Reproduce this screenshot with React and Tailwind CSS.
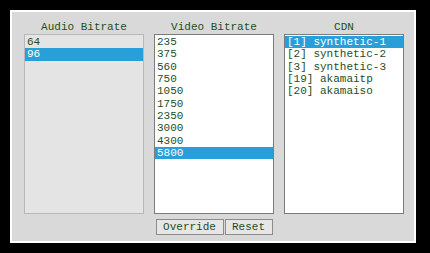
const audio = ['64', '96'];
const video = ['235', '375', '560', '750', '1050', '1750', '2350', '3000', '4300', '5800'];
const cdn = ['[1] synthetic-1', '[2] synthetic-2', '[3] synthetic-3', '[19] akamaitp', '[20] akamaiso'];

const ListBox = ({ title, items, selected, disabled }) => {
  return (
    <div className="flex flex-col w-[120px]">
      <div className="h-[14px] leading-[14px] text-center text-[#1f4d1f]">{title}</div>
      <div
        className={
          disabled
            ? 'h-[180px] border border-[#b8b8b8] bg-[#e4e4e4] py-[1px]'
            : 'h-[180px] border border-[#7c7c7c] bg-white py-[1px]'
        }
      >
        {items.map((item) => (
          <div
            key={item}
            className={
              item === selected
                ? 'h-[12.33px] leading-[12.33px] pl-[2px] whitespace-pre bg-[#289fd8] text-white'
                : 'h-[12.33px] leading-[12.33px] pl-[2px] whitespace-pre text-[#1f4d1f]'
            }
          >
            {item}
          </div>
        ))}
      </div>
    </div>
  );
};

export default function App() {
  return (
    <div
      className="w-[430px] h-[253px] bg-black pt-[10px] pl-[10px] text-[11px]"
      style={{ fontFamily: '"Liberation Mono", "Courier New", monospace' }}
    >
      <div className="w-[406px] h-[233px] border-2 border-white bg-[#d9d9d9] pl-[12px] pt-[8px]">
        <div className="flex gap-[10px]">
          <ListBox title="Audio Bitrate" items={audio} selected="96" disabled />
          <ListBox title="Video Bitrate" items={video} selected="5800" />
          <ListBox title="CDN" items={cdn} selected="[1] synthetic-1" />
        </div>
        <div className="flex justify-center gap-[1px] mt-[5px] w-[380px]">
          <button className="h-[16px] w-[68px] border border-[#8c8c8c] bg-[#e6e6e6] text-[#1f4d1f] leading-[14px]">
            Override
          </button>
          <button className="h-[16px] w-[48px] border border-[#8c8c8c] bg-[#e6e6e6] text-[#1f4d1f] leading-[14px]">
            Reset
          </button>
        </div>
      </div>
    </div>
  );
}
